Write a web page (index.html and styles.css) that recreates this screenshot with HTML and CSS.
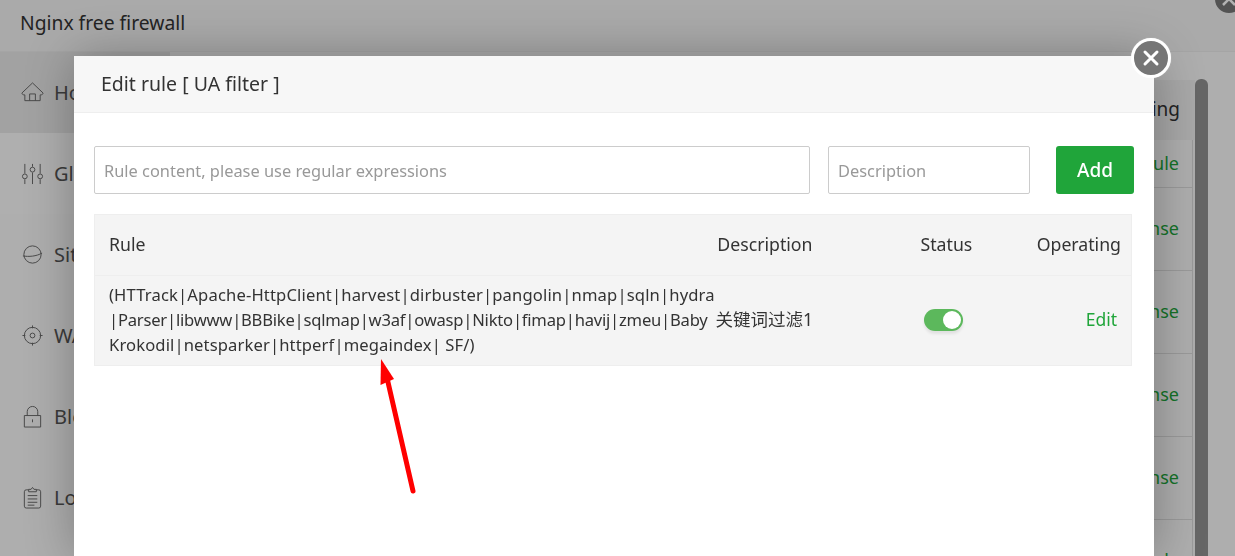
FILE: index.html
```html
<!DOCTYPE html>
<html lang="en">
<head>
<meta charset="utf-8">
<title>Nginx free firewall</title>
<link rel="stylesheet" href="styles.css">
</head>
<body>
<div class="page">
  <header class="topbar">Nginx free firewall</header>
  <div class="main">
    <nav class="side">
      <div class="item active"><svg class="ico" viewBox="0 0 24 24"><path d="M1 12.500 12 2l11 10.500M1 12.500c0 1.500 1 2 3 2v6h16v-6c2 0 3-.5 3-2M9 20.500v-7h6v7"/></svg>Home</div>
      <div class="item light"><svg class="ico" viewBox="0 0 24 24"><path d="M4 2v10M4 18v5M12 2v3M12 11v12M20 2v10M20 18v5"/><circle cx="4" cy="15" r="2.500"/><circle cx="12" cy="8" r="2.500"/><circle cx="20" cy="15" r="2.500"/></svg>Global</div>
      <div class="item"><svg class="ico" viewBox="0 0 24 24"><circle cx="12" cy="12" r="9"/><path d="M2 13.500c6 1 14 .5 20-3"/></svg>Site</div>
      <div class="item"><svg class="ico" viewBox="0 0 24 24"><circle cx="12" cy="12" r="8.500"/><circle cx="12" cy="12" r="2.500"/><path d="M12 1.500v3M12 19.500v3M1.500 12h3M19.500 12h3"/></svg>WAF</div>
      <div class="item"><svg class="ico" viewBox="0 0 24 24"><path d="M3.500 11h17v12h-17zM6.500 11V7a5.500 5.500 0 0 1 11 0v4M12 15v3"/></svg>Block</div>
      <div class="item"><svg class="ico" viewBox="0 0 24 24"><path d="M8 4H5.500a2 2 0 0 0-2 2v15a2 2 0 0 0 2 2h13a2 2 0 0 0 2-2V6a2 2 0 0 0-2-2H16M8 6V3.500h2.500L12 1.500l1.500 2H16V6zM7 10h10M7 13.500h10M7 17h10M7 20h7"/></svg>Logs</div>
    </nav>
    <section class="content">
      <div class="bg-head">Operating</div>
      <div class="bg-row first">Set rule</div>
      <div class="bg-row">Response</div>
      <div class="bg-row">Response</div>
      <div class="bg-row">Response</div>
      <div class="bg-row">Response</div>
      <div class="bg-row">Set rule</div>
    </section>
    <div class="scrollbar"><div class="thumb"></div></div>
  </div>
</div>
<div class="corner-close"><svg viewBox="0 0 28 28"><path d="M8 8l12 12M20 8 8 20"/></svg></div>
<div class="shade"></div>
<div class="modal">
  <div class="modal-title">Edit rule [ UA filter ]</div>
  <div class="modal-body">
    <form class="add-form">
      <input class="field rule-field" type="text" placeholder="Rule content, please use regular expressions">
      <input class="field desc-field" type="text" placeholder="Description">
      <button class="add-btn" type="button">Add</button>
    </form>
    <table class="rules">
      <thead>
        <tr><th class="c-rule">Rule</th><th class="c-desc">Description</th><th class="c-status">Status</th><th class="c-op">Operating</th></tr>
      </thead>
      <tbody>
        <tr>
          <td class="c-rule"><span class="line l1">(HTTrack|Apache-HttpClient|harvest|dirbuster|pangolin|nmap|sqln|hydra</span><span class="line l2">|Parser|libwww|BBBike|sqlmap|w3af|owasp|Nikto|fimap|havij|zmeu|Baby</span><span class="line l3">Krokodil|netsparker|httperf|megaindex| SF/)</span></td>
          <td class="c-desc">关键词过滤1</td>
          <td class="c-status"><span class="toggle"></span></td>
          <td class="c-op"><a class="edit">Edit</a></td>
        </tr>
      </tbody>
    </table>
  </div>
</div>
<div class="modal-close"><svg viewBox="0 0 34 34"><path d="M11 11l12 12M23 11 11 23"/></svg></div>
<svg class="arrow" viewBox="0 0 60 150"><path class="arrow-line" d="M43 141 17.500 30"/><path class="arrow-head" d="M11 9 24 29 10.500 35z"/></svg>
</body>
</html>
```
FILE: styles.css
```css
* { box-sizing: border-box; }
html, body { margin: 0; height: 100%; overflow: hidden; }
body {
  font-family: "Noto Sans", "Noto Sans CJK SC", sans-serif;
  font-size: 16.400px;
  color: #333;
  background: #fafafa;
}
.page { height: 556px; overflow: hidden; display: flex; flex-direction: column; }
.topbar {
  height: 52px;
  flex: none;
  padding: 10px 20px 0;
  font-size: 19.300px;
  line-height: 25px;
  background: #f4f4f4;
  border-bottom: 1px solid #ececec;
}
.main { display: flex; flex: 1; min-height: 0; }
.side { width: 170px; flex: none; background: #f9f9f9; }
.item {
  height: 81px;
  display: flex;
  align-items: center;
  gap: 10px;
  padding-left: 21px;
  font-size: 20px;
  color: #555;
}
.item.active { background: #e8e8e8; }
.item.light { background: #fbfbfb; }
.ico { width: 23px; height: 23px; flex: none; fill: none; stroke: #666; stroke-width: 1; }
.content { flex: 1; margin-top: 28px; min-width: 0; text-align: right; }
.bg-head { height: 60px; padding: 14px 15px 0 0; line-height: 30px; font-size: 19px; background: #f1f1f1; color: #333; }
.bg-row { height: 83px; padding: 25px 13px 0 0; line-height: 30px; font-size: 18px; color: #20a53a; border-bottom: 1px solid #ddd; border-right: 1px solid #ddd; margin-right: 2px; }
.bg-row.first { height: 48px; padding-top: 8px; }
.scrollbar { width: 40px; flex: none; padding: 27px 27px 0 0; }
.thumb { width: 13px; height: 100%; background: #929292; border-radius: 6px 6px 0 0; }
.corner-close {
  position: absolute; left: 1215px; top: -15px; width: 28px; height: 28px;
  border-radius: 50%; background: #777;
}
.corner-close svg { display: block; stroke: #fff; stroke-width: 2.500; }
.shade { position: fixed; inset: 0; background: rgba(0, 0, 0, .3); }
.modal {
  position: absolute; left: 74px; top: 56px; width: 1080px; height: 500px;
  background: #fff;
  box-shadow: 1px 1px 50px rgba(0, 0, 0, .3);
  border-radius: 2px 2px 0 0;
}
.modal-title {
  height: 57px;
  padding-left: 27px;
  line-height: 56px;
  font-size: 19.500px;
  background: #f7f7f7;
  border-bottom: 1px solid #eee;
}
.modal-body { padding: 33px 20px 0; }
.add-form { display: flex; height: 48px; margin-bottom: 20px; }
.field {
  height: 48px;
  padding: 1px 9px 0;
  border: 1px solid #ccc;
  border-radius: 2px;
  font: inherit;
  color: #333;
  outline: none;
}
.field::placeholder { color: #999; opacity: 1; }
.rule-field { width: 716px; margin-right: 18px; }
.desc-field { width: 202px; margin-right: 26px; }
.add-btn {
  width: 78px;
  height: 48px;
  border: 0;
  border-radius: 3px;
  background: #20a53a;
  color: #fff;
  font: 500 19px "Noto Sans", sans-serif;
}
.rules {
  width: 1038px;
  table-layout: fixed;
  border-collapse: collapse;
  background: #f4f4f4;
  border: 1px solid #eee;
}
.rules th { height: 61px; padding: 0 0 3px; font-weight: 400; font-size: 17.700px; border-bottom: 1px solid #eee; }
.rules td { height: 90px; padding: 0 0 3px; line-height: 25px; font-size: 16.600px; vertical-align: middle; }
.c-rule { width: 621px; padding-left: 14px !important; text-align: left; white-space: nowrap; }
.line { display: block; }
.l1 { letter-spacing: .145px; }
.l2 { letter-spacing: -.22px; }
.l3 { letter-spacing: .12px; }
.rules td.c-desc { font-size: 17.500px; }
.c-desc { width: 97px; text-align: right; white-space: nowrap; }
.rules .c-status { width: 200px; text-align: left; padding-left: 108px; }
.rules td.c-status { padding-bottom: 1px; }
.c-op { text-align: right; padding-right: 10px !important; }
.rules td.c-op { font-size: 17.500px; }
.toggle {
  display: block;
  position: relative;
  width: 39px;
  height: 22px;
  margin-left: 3px;
  border-radius: 11px;
  background: #5cb85c;
  box-shadow: 0 3px 3px rgba(0, 0, 0, .08);
}
.toggle::after {
  content: "";
  position: absolute;
  right: 2px;
  top: 2px;
  width: 18px;
  height: 18px;
  border-radius: 50%;
  background: #fff;
}
.edit { color: #20a53a; margin-right: 4px; }
.modal-close {
  position: absolute; left: 1131px; top: 38px; width: 40px; height: 40px;
  border-radius: 50%;
  background: #767676;
  border: 3px solid #fff;
  box-shadow: 0 0 1px rgba(255, 255, 255, .5);
}
.modal-close svg { display: block; fill: none; stroke: #fff; stroke-width: 3; stroke-linecap: round; }
.arrow { position: absolute; left: 370px; top: 350px; width: 60px; height: 150px; }
.arrow-line { fill: none; stroke: #f00; stroke-width: 5; stroke-linecap: round; }
.arrow-head { fill: #f00; }
```
